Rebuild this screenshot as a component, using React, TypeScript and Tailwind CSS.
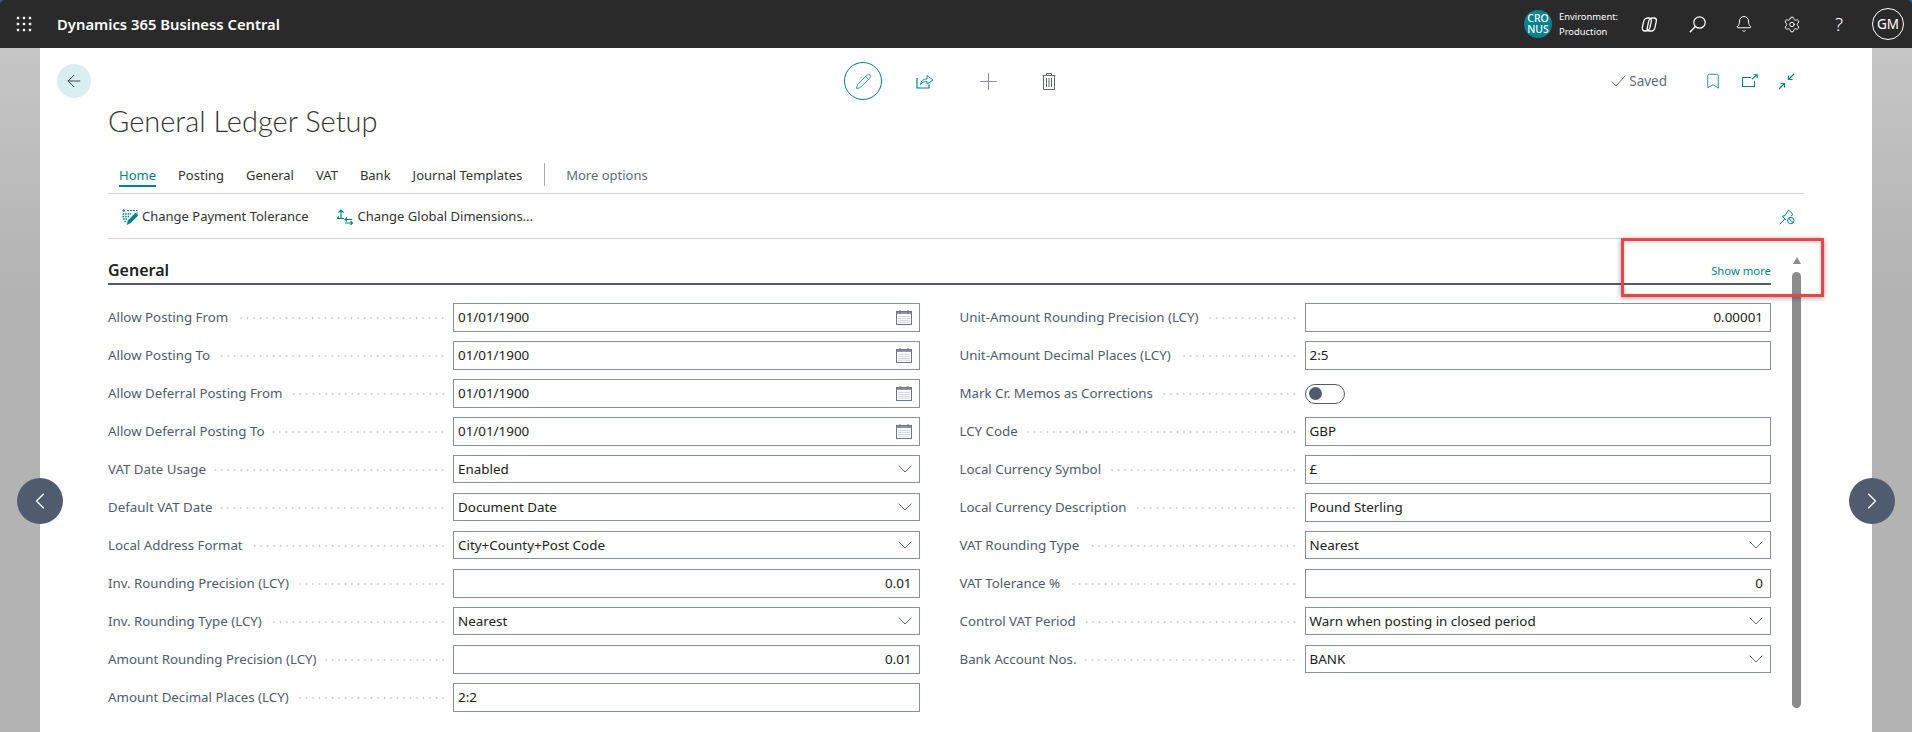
import React from "react";
import { Bell, Settings, Pencil, Plus, Bookmark, ArrowLeft, ChevronLeft, ChevronRight } from "lucide-react";

const Waffle = () => (
  <svg width="16" height="16" viewBox="0 0 16 16" fill="#fff">
    {[2, 8, 14].map((y) => [2, 8, 14].map((x) => <rect key={`${x}-${y}`} x={x - 1.2} y={y - 1.2} width="2.4" height="2.4" />))}
  </svg>
);

const Calendar = () => (
  <svg width="16" height="15" viewBox="0 0 16 15" fill="none" className="shrink-0">
    <rect x="0.5" y="1.5" width="15" height="13" fill="#fff" stroke="#6b7686" />
    <rect x="1" y="2" width="14" height="2" fill="#8a94a3" />
    <rect x="3.5" y="0" width="1" height="3" fill="#6b7686" />
    <rect x="11.5" y="0" width="1" height="3" fill="#6b7686" />
    {[6.5, 8.5, 10.5, 12.2].map((y) =>
      [3, 5, 7, 9, 11, 13].map((x) => <rect key={`${x}-${y}`} x={x - 0.5} y={y - 0.5} width="1" height="1" fill="#a6b0cc" />)
    )}
  </svg>
);

const Chevron = () => (
  <svg width="14" height="8" viewBox="0 0 14 8" fill="none" className="shrink-0">
    <path d="M0.7 0.7 L7 7 L13.3 0.7" stroke="#5f6b7c" strokeWidth="1" />
  </svg>
);

const ShareIcon = () => (
  <svg width="18" height="16" viewBox="0 0 18 16" fill="none" stroke="#00818a" strokeWidth="0.9">
    <path d="M1 5 V15 H13 V11.5" strokeWidth="1.2" />
    <path d="M4.5 11.5 C5 7.5 7.5 6 11 6 V2.5 L17 7 L11 11 V8.5 C8.5 8.5 6 9 4.5 11.5 Z" />
  </svg>
);

const TrashIcon = () => (
  <svg width="14" height="17" viewBox="0 0 14 17" fill="none" stroke="#5f6673" strokeWidth="1">
    <path d="M0.5 2.5 H13.5 M4.5 2.5 V0.5 H9.5 V2.5" />
    <path d="M1.5 2.5 V16.5 H12.5 V2.5" />
    <path d="M4.5 5 V14 M7 5 V14 M9.5 5 V14" />
  </svg>
);

const OpenNew = () => (
  <svg width="16" height="14" viewBox="0 0 16 14" fill="none" stroke="#00818a" strokeWidth="1.1">
    <path d="M9 3.5 H0.6 V12.5 H12.5 V7" />
    <path d="M10 5 L15 0.8 M11.5 0.8 H15.2 V4" />
  </svg>
);

const Collapse = () => (
  <svg width="17" height="17" viewBox="0 0 17 17" fill="none" stroke="#00818a" strokeWidth="1.1">
    <path d="M16 1 L10.5 6.5 M10.5 2.5 V6.5 H14.5" />
    <path d="M1 16 L6.5 10.5 M6.5 14.5 V10.5 H2.5" />
  </svg>
);

const Copilot = () => (
  <svg width="18" height="17" viewBox="0 0 18 17" fill="none" stroke="#fff" strokeWidth="1.3">
    <rect x="3.4" y="2" width="7.6" height="13" rx="3.4" transform="skewX(-12) translate(2.4 0)" />
    <rect x="8" y="2" width="7.6" height="13" rx="3" transform="skewX(-12) translate(2.8 0)" />
  </svg>
);

const SearchIcon = () => (
  <svg width="17" height="17" viewBox="0 0 17 17" fill="none" stroke="#fff" strokeWidth="1.2">
    <circle cx="10.5" cy="6.5" r="5.7" />
    <path d="M6.4 10.6 L0.8 16.2" strokeWidth="1.4" />
  </svg>
);

const PinOff = () => (
  <svg width="16" height="16" viewBox="0 0 16 16" fill="none" stroke="#00818a" strokeWidth="1">
    <path d="M0.7 15.3 L5.8 10.2" />
    <path d="M3.2 7.2 L6 6.6 L9.6 1 L14 5.4 L12 7" />
    <path d="M3.2 7.2 L7.2 11.2" />
    <circle cx="11.8" cy="11.5" r="3.2" />
    <path d="M9.6 9.3 L14 13.7" />
  </svg>
);

const TolIcon = () => (
  <svg width="16" height="16" viewBox="0 0 16 16" fill="none" stroke="#00818a" strokeWidth="1.1">
    <path d="M0.5 1.5 H3 M1.8 0.3 V3" />
    <path d="M5 1.5 H15 V5" strokeDasharray="2 1" />
    <path d="M0.5 5 H9 M0.5 7.5 H7 M1 10 H5.5 M2.5 12.5 H4.5" strokeDasharray="1.6 1" strokeWidth="1.4" />
    <path d="M5.5 15 L6.5 11.5 L13.5 4.5 L15.5 6.5 L8.5 13.5 Z" fill="#00818a" />
  </svg>
);

const DimIcon = () => (
  <svg width="16" height="16" viewBox="0 0 16 16" fill="none" stroke="#00818a" strokeWidth="1.2">
    <path d="M4 9 V1 M1.5 3.5 L4 1 L6.5 3.5" />
    <path d="M0 9.5 L2 7.5 M0 9.5 H7" />
    <path d="M8 10.5 H15 M10 8.5 L8 10.5 L10 12.5" />
    <path d="M8 14 H15.5 M13.5 12 L15.5 14 L13.5 16" />
  </svg>
);

type Field = { label: string; value?: string; kind: "date" | "select" | "text" | "num" | "toggle" };

const left: Field[] = [
  { label: "Allow Posting From", value: "01/01/1900", kind: "date" },
  { label: "Allow Posting To", value: "01/01/1900", kind: "date" },
  { label: "Allow Deferral Posting From", value: "01/01/1900", kind: "date" },
  { label: "Allow Deferral Posting To", value: "01/01/1900", kind: "date" },
  { label: "VAT Date Usage", value: "Enabled", kind: "select" },
  { label: "Default VAT Date", value: "Document Date", kind: "select" },
  { label: "Local Address Format", value: "City+County+Post Code", kind: "select" },
  { label: "Inv. Rounding Precision (LCY)", value: "0.01", kind: "num" },
  { label: "Inv. Rounding Type (LCY)", value: "Nearest", kind: "select" },
  { label: "Amount Rounding Precision (LCY)", value: "0.01", kind: "num" },
  { label: "Amount Decimal Places (LCY)", value: "2:2", kind: "text" },
];

const right: Field[] = [
  { label: "Unit-Amount Rounding Precision (LCY)", value: "0.00001", kind: "num" },
  { label: "Unit-Amount Decimal Places (LCY)", value: "2:5", kind: "text" },
  { label: "Mark Cr. Memos as Corrections", kind: "toggle" },
  { label: "LCY Code", value: "GBP", kind: "text" },
  { label: "Local Currency Symbol", value: "£", kind: "text" },
  { label: "Local Currency Description", value: "Pound Sterling", kind: "text" },
  { label: "VAT Rounding Type", value: "Nearest", kind: "select" },
  { label: "VAT Tolerance %", value: "0", kind: "num" },
  { label: "Control VAT Period", value: "Warn when posting in closed period", kind: "select" },
  { label: "Bank Account Nos.", value: "BANK", kind: "select" },
];

function Control({ f }: { f: Field }) {
  if (f.kind === "toggle") {
    return (
      <div className="h-[29px] flex items-center">
        <div className="w-[40px] h-[20px] rounded-full border border-[#505c6e] flex items-center pl-[3px]">
          <div className="w-[13px] h-[13px] rounded-full bg-[#505c6e]" />
        </div>
      </div>
    );
  }
  const h = f.kind === "select" ? "h-[28px]" : "h-[29px]";
  return (
    <div className={`${h} w-full border border-[#8a8f9c] bg-white flex items-center pl-[4px] pr-[7px] text-[13.4px] text-[#212121]`}>
      {f.kind === "num" ? <span className="ml-auto">{f.value}</span> : <span>{f.value}</span>}
      {f.kind === "date" && <span className="ml-auto"><Calendar /></span>}
      {f.kind === "select" && <span className="ml-auto"><Chevron /></span>}
    </div>
  );
}

function Row({ f }: { f: Field }) {
  return (
    <div className="h-[38px] flex items-start">
      <div className="w-[345px] shrink-0 h-[29px] flex items-center pr-[7px] text-[13.3px] text-[#505c6e]">
        <span className="whitespace-nowrap">{f.label}</span>
        <div className="flex-1 ml-[8px] h-[4px] bg-[radial-gradient(circle,#c4c8cf_0.9px,transparent_1.1px)] bg-[length:6.5px_4px] bg-repeat-x bg-right" />
      </div>
      <div className="flex-1 min-w-0">
        <Control f={f} />
      </div>
    </div>
  );
}

export default function App() {
  const tabs = ["Posting", "General", "VAT", "Bank", "Journal Templates"];
  return (
    <div className="h-[732px] w-full overflow-hidden flex flex-col bg-[#1c5c90] font-['Noto_Sans',sans-serif] relative">
      <header className="h-12 shrink-0 rounded-t-[5px] bg-[#2a2a2a] flex items-center text-white">
        <div className="ml-[16px]"><Waffle /></div>
        <div className="ml-[25px] text-[14.8px] font-semibold">Dynamics 365 Business Central</div>
        <div className="ml-auto flex items-center">
          <div className="w-[28px] h-[28px] rounded-full bg-[#00838f] flex flex-col items-center justify-center text-[10.5px] leading-[11px] font-medium">
            <span>CRO</span>
            <span>NUS</span>
          </div>
          <div className="ml-[7px] w-[66px] text-[9.4px] leading-[15px]">
            <div>Environment:</div>
            <div>Production</div>
          </div>
          <div className="ml-[14px] w-[18px] flex justify-center"><Copilot /></div>
          <div className="ml-[31px] w-[18px] flex justify-center"><SearchIcon /></div>
          <div className="ml-[29px] w-[18px] flex justify-center"><Bell size={18} strokeWidth={1.3} /></div>
          <div className="ml-[30px] w-[18px] flex justify-center"><Settings size={19} strokeWidth={1.3} /></div>
          <div className="ml-[29px] w-[18px] text-center text-[19px] font-light">?</div>
          <div className="ml-[24px] mr-[8px] w-[32px] h-[32px] rounded-full border border-white flex items-center justify-center text-[13.5px]">GM</div>
        </div>
      </header>

      <main className="flex-1 bg-[linear-gradient(to_bottom,#c6c6c6,#b3b3b3_35%)] px-[40px] relative min-h-0">
        <div className="h-full bg-white relative overflow-hidden">
          <div className="flex items-center pt-[14px] h-[52px] pl-[17px] pr-[77px]">
            <div className="w-[34px] h-[34px] rounded-full bg-[#d8eef1] flex items-center justify-center">
              <ArrowLeft size={20} strokeWidth={1.1} color="#333" />
            </div>
            <div className="ml-[753px] w-[38px] h-[38px] rounded-full border border-[#00818a] flex items-center justify-center">
              <Pencil size={17} strokeWidth={1.1} color="#00818a" />
            </div>
            <div className="ml-[34px]"><ShareIcon /></div>
            <div className="ml-[41px]"><Plus size={27} strokeWidth={1} color="#8b8f98" /></div>
            <div className="ml-[40px]"><TrashIcon /></div>
            <div className="ml-auto flex items-center text-[13.5px] text-[#5f6b7c]">
              <svg width="15" height="12" viewBox="0 0 15 12" fill="none" stroke="#5f6b7c" strokeWidth="1"><path d="M0.7 6.5 L5 11 L14.3 0.7" /></svg>
              <span className="ml-[3px]">Saved</span>
              <span className="ml-[37px]"><Bookmark size={18} strokeWidth={1.1} color="#00818a" /></span>
              <span className="ml-[20px]"><OpenNew /></span>
              <span className="ml-[20px]"><Collapse /></span>
            </div>
          </div>

          <h1 className="ml-[68px] h-[44px] flex items-center pb-[2px] text-[29px] font-['Lato',sans-serif] font-light text-[#333]">General Ledger Setup</h1>

          <div className="mx-[68px] mt-[19px]">
            <div className="h-[30px] flex items-start border-b border-[#d2d2d2] text-[13px] text-[#333] box-content pl-[11px]">
              <div className="h-[22px] leading-[24px] border-b-2 border-[#00818a] text-[#00818a] box-content">Home</div>
              {tabs.map((t) => (
                <div key={t} className="ml-[22px] leading-[24px]">{t}</div>
              ))}
              <div className="ml-[22px] w-px h-[23px] bg-[#a8adb5]" />
              <div className="ml-[21px] leading-[24px] text-[#5f6b7c]">More options</div>
            </div>
            <div className="h-[45px] border-b border-[#d2d2d2] flex items-center pl-[14px] pt-[2px] text-[13px] text-[#333]">
              <TolIcon />
              <span className="ml-[4px]">Change Payment Tolerance</span>
              <span className="ml-[28px]"><DimIcon /></span>
              <span className="ml-[5px]">Change Global Dimensions...</span>
              <span className="ml-auto mr-[9px]"><PinOff /></span>
            </div>
          </div>

          <div className="ml-[68px] mr-[71px] flex">
            <div className="flex-1 min-w-0">
              <div className="h-[46px] border-b-2 border-[#505c6e] flex items-end justify-between pb-[2px]">
                <span className="text-[16px] font-semibold text-[#212121] leading-[22px]">General</span>
                <span className="text-[11.3px] text-[#00818a] leading-[20px]">Show more</span>
              </div>
              <div className="mt-[18px] grid grid-cols-2 gap-x-[40px]">
                <div>{left.map((f) => <Row key={f.label} f={f} />)}</div>
                <div>{right.map((f) => <Row key={f.label} f={f} />)}</div>
              </div>
            </div>
            <div className="ml-[21px] w-[9px] pt-[18px] flex flex-col items-center">
              <div className="w-0 h-0 border-l-[4.5px] border-r-[4.5px] border-b-[7px] border-l-transparent border-r-transparent border-b-[#8c8c8c]" />
              <div className="mt-[8px] h-[436px] w-full rounded-full bg-[#8c8c8c]" />
            </div>
          </div>

          <div className="absolute left-[1581px] top-[190px] w-[203px] h-[59px] border-[3px] border-[#f04444] shadow-[0_1px_5px_rgba(0,0,0,0.4),inset_0_1px_4px_rgba(0,0,0,0.2)]" />
        </div>

        <div className="absolute left-[17px] top-[430px] w-[46px] h-[46px] rounded-full bg-[#505c6e] flex items-center justify-center">
          <ChevronLeft size={28} strokeWidth={1} color="#fff" />
        </div>
        <div className="absolute left-[1849px] top-[430px] w-[46px] h-[46px] rounded-full bg-[#505c6e] flex items-center justify-center">
          <ChevronRight size={28} strokeWidth={1} color="#fff" />
        </div>
      </main>
    </div>
  );
}
